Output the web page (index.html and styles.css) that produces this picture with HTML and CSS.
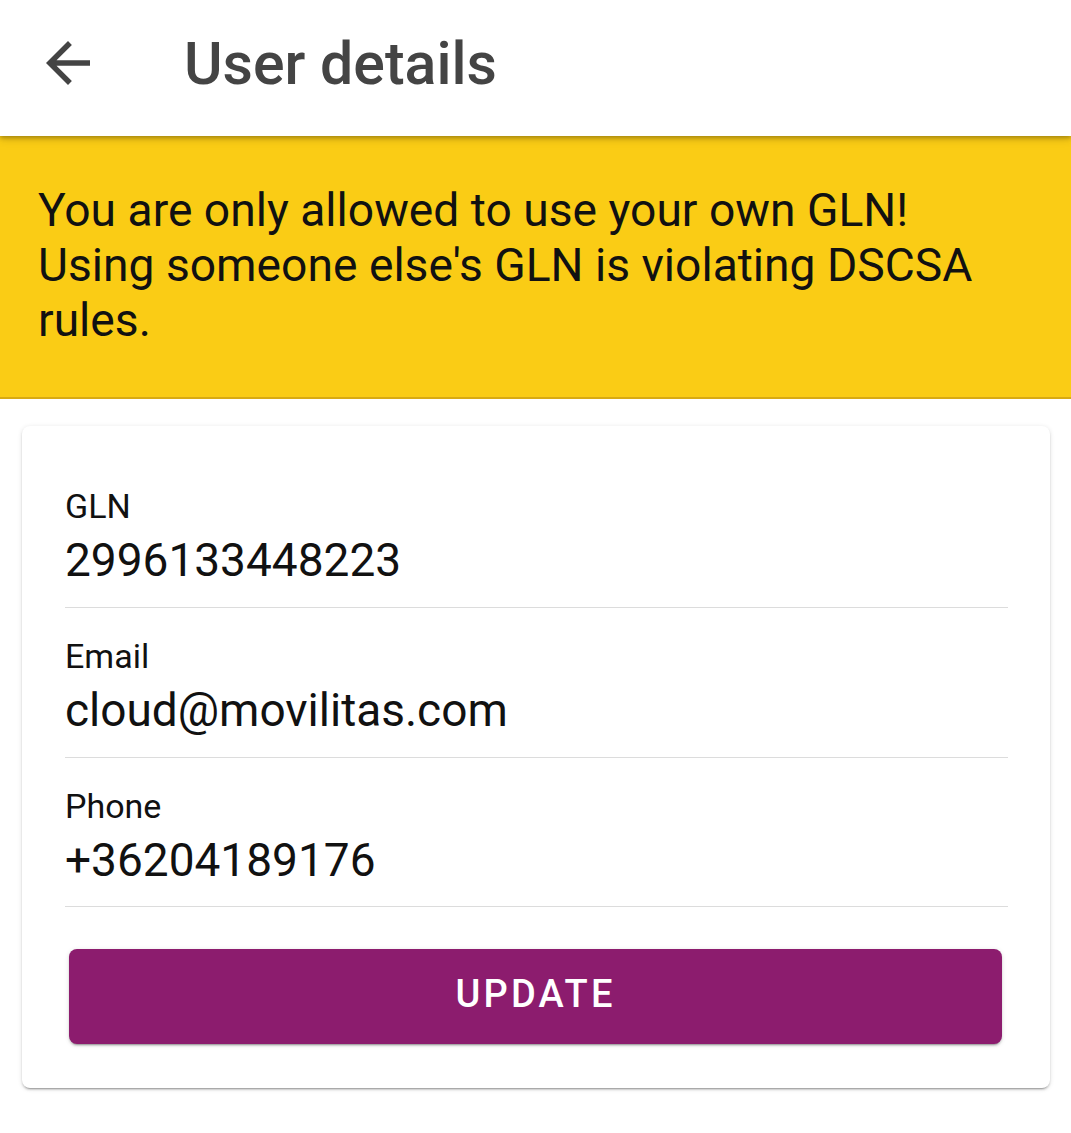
FILE: index.html
```html
<!DOCTYPE html>
<html lang="en">
<head>
<meta charset="utf-8">
<title>User details</title>
<link rel="stylesheet" href="styles.css">
</head>
<body>
<header class="appbar">
  <button class="back" aria-label="Back">
    <svg viewBox="0 0 24 24" width="66" height="66"><path d="M20 11H7.83l5.59-5.59L12 4l-8 8 8 8 1.41-1.41L7.83 13H20v-2z" fill="currentColor"/></svg>
  </button>
  <h1 class="title">User details</h1>
</header>
<div class="banner">
  <p>You are only allowed to use your own GLN! Using someone else's GLN is violating DSCSA rules.</p>
</div>
<main class="content">
  <section class="card">
    <div class="field">
      <div class="label">GLN</div>
      <div class="value">2996133448223</div>
    </div>
    <div class="field">
      <div class="label">Email</div>
      <div class="value">cloud@movilitas.com</div>
    </div>
    <div class="field">
      <div class="label">Phone</div>
      <div class="value">+36204189176</div>
    </div>
    <button class="update">UPDATE</button>
  </section>
</main>
</body>
</html>
```
FILE: styles.css
```css
* { box-sizing: border-box; }
html, body { margin: 0; padding: 0; background: #fff; }
body { font-family: Roboto, "Noto Sans", sans-serif; color: #111; }

.appbar {
  position: relative;
  z-index: 2;
  height: 136px;
  padding: 0 0 10px 35px;
  display: flex;
  align-items: center;
  background: #fff;
  box-shadow: 0 2px 4px rgba(0,0,0,0.25), 0 4px 8px rgba(0,0,0,0.12);
}
.back {
  border: 0;
  background: none;
  padding: 0;
  width: 66px;
  height: 66px;
  color: #444;
  display: flex;
}
.title {
  margin: 0 0 0 83px;
  font-size: 59px;
  font-weight: 500;
  color: #444;
  line-height: 1;
}

.banner {
  background: #facc15;
  padding: 47px 38px 49px;
  border-bottom: 2px solid #d8aa12;
}
.banner p {
  margin: 0;
  font-size: 46.2px;
  line-height: 55px;
  color: #111;
}

.content { padding: 27px 21px 40px 22px; }
.card {
  background: #fff;
  border-radius: 8px;
  padding: 32px 42px 44px 43px;
  box-shadow: 0 2px 2px rgba(0,0,0,0.14), 0 3px 1px -2px rgba(0,0,0,0.2), 0 1px 5px rgba(0,0,0,0.12);
}
.field {
  padding: 28px 0 20px;
  border-bottom: 1px solid #dcdcdc;
}
.field:last-of-type { padding-bottom: 19px; }
.label {
  font-size: 34px;
  line-height: 40px;
  color: #111;
}
.value {
  margin-top: 7px;
  font-size: 46px;
  line-height: 54px;
  color: #111;
}
.update {
  display: block;
  width: calc(100% - 10px);
  margin: 42px 6px 0 4px;
  height: 95px;
  padding: 0 0 6px;
  border: 0;
  border-radius: 8px;
  background: #8c1c6e;
  color: #fff;
  font-family: Roboto, sans-serif;
  font-size: 38px;
  font-weight: 500;
  letter-spacing: 3.2px;
  box-shadow: 0 3px 1px -2px rgba(0,0,0,0.2), 0 2px 2px rgba(0,0,0,0.14), 0 1px 5px rgba(0,0,0,0.12);
}
```
